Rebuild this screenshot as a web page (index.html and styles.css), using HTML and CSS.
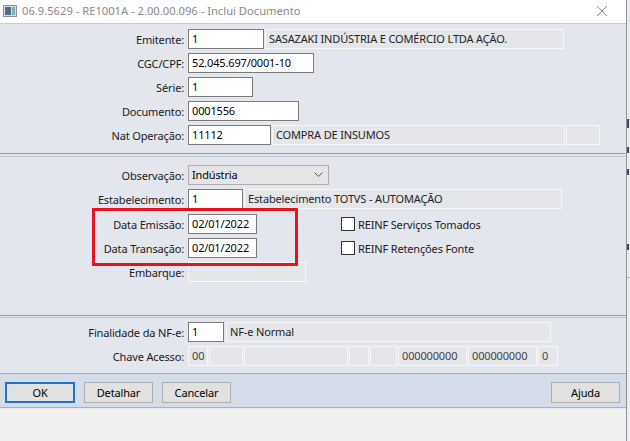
FILE: index.html
```html
<!DOCTYPE html>
<html lang="pt-BR">

<head>
    <meta charset="UTF-8">
    <meta name="viewport" content="width=device-width, initial-scale=1.0">
    <title>Inclui Documento</title>
    <link rel="stylesheet" href="styles.css">
</head>

<body>
    <div class="window">
        <div class="titlebar">
            <svg class="app-icon" width="14" height="12" viewBox="0 0 14 12">
                <rect x="0.5" y="0.5" width="13" height="11" fill="#d9dde3" stroke="#8a9099"/>
                <rect x="2" y="2" width="6" height="8" fill="#4d6f86"/>
                <rect x="9" y="2" width="3" height="8" fill="#7fb0b8"/>
            </svg>
            <span class="title">06.9.5629 - RE1001A - 2.00.00.096 - Inclui Documento</span>
            <svg class="close" width="12" height="12" viewBox="0 0 12 12">
                <path d="M1 1 L11 11 M11 1 L1 11" stroke="#8c8c8c" stroke-width="1"/>
            </svg>
        </div>

        <div class="content">
            <!-- dados do emitente -->
            <section class="group group-top">
                <div class="row">
                    <label class="lbl">Emitente:</label>
                    <span class="field w-emit">1</span>
                    <span class="ro w-razao">SASAZAKI INDÚSTRIA E COMÉRCIO LTDA AÇÃO.</span>
                </div>
                <div class="row">
                    <label class="lbl">CGC/CPF:</label>
                    <span class="field w-cgc">52.045.697/0001-10</span>
                </div>
                <div class="row">
                    <label class="lbl">Série:</label>
                    <span class="field w-serie">1</span>
                </div>
                <div class="row">
                    <label class="lbl">Documento:</label>
                    <span class="field w-doc">0001556</span>
                </div>
                <div class="row">
                    <label class="lbl">Nat Operação:</label>
                    <span class="field w-nat">11112</span>
                    <span class="ro w-natdesc">COMPRA DE INSUMOS</span>
                    <span class="ro w-natx"></span>
                </div>
            </section>

            <!-- datas -->
            <section class="group group-mid">
                <div class="row">
                    <label class="lbl">Observação:</label>
                    <span class="select">Indústria
                        <svg class="chevron" width="9" height="6" viewBox="0 0 9 6">
                            <path d="M0.5 0.5 L4.5 4.5 L8.5 0.5" fill="none" stroke="#555" stroke-width="1"/>
                        </svg>
                    </span>
                </div>
                <div class="row">
                    <label class="lbl">Estabelecimento:</label>
                    <span class="field w-estab">1</span>
                    <span class="ro w-estabdesc">Estabelecimento TOTVS - AUTOMAÇÃO</span>
                </div>
                <div class="row row-date">
                    <label class="lbl">Data Emissão:</label>
                    <span class="field w-date">02/01/2022</span>
                    <span class="check"></span>
                    <span class="check-label">REINF Serviços Tomados</span>
                </div>
                <div class="row">
                    <label class="lbl">Data Transação:</label>
                    <span class="field w-date">02/01/2022</span>
                    <span class="check"></span>
                    <span class="check-label">REINF Retenções Fonte</span>
                </div>
                <div class="row">
                    <label class="lbl">Embarque:</label>
                    <span class="ro w-embarque"></span>
                </div>
                <div class="highlight"></div>
            </section>

            <!-- nf-e -->
            <section class="group group-nfe">
                <div class="row">
                    <label class="lbl">Finalidade da NF-e:</label>
                    <span class="field w-fin">1</span>
                    <span class="ro w-findesc">NF-e Normal</span>
                </div>
                <div class="row">
                    <label class="lbl">Chave Acesso:</label>
                    <span class="ro key k1">00</span>
                    <span class="ro key k2"></span>
                    <span class="ro key k3"></span>
                    <span class="ro key k4"></span>
                    <span class="ro key k5"></span>
                    <span class="ro key k6">000000000</span>
                    <span class="ro key k6">000000000</span>
                    <span class="ro key k4">0</span>
                </div>
            </section>

            <div class="buttonbar">
                <button class="btn btn-default">OK</button>
                <button class="btn">Detalhar</button>
                <button class="btn">Cancelar</button>
                <span class="spacer"></span>
                <button class="btn">Ajuda</button>
            </div>
            <div class="statusbar"></div>
        </div>
    </div>

    <div class="behind">
        <span class="frag f1"></span>
        <span class="frag f2"></span>
        <span class="frag f3"></span>
        <span class="frag f4"></span>
        <span class="frag f5"></span>
    </div>
</body>

</html>
```

FILE: styles.css
```css
body {
    margin: 0;
    padding: 0;
    display: flex;
    width: 630px;
    height: 441px;
    overflow: hidden;
    font-family: "Noto Sans", "Open Sans", sans-serif;
    font-size: 11px;
    letter-spacing: -0.15px;
    color: #000;
    background-color: #e8e8e8;
}

.window {
    width: 626px;
    height: 441px;
    border-right: 1px solid #8f949b;
    display: flex;
    flex-direction: column;
    background-color: #e3e6ed;
}

.titlebar {
    height: 23px;
    background-color: #fff;
    border-bottom: 1px solid #c9ccd2;
    display: flex;
    align-items: center;
    padding-left: 3px;
}

.app-icon {
    margin-top: -1px;
}

.title {
    margin-left: 5px;
    color: #8a8a8a;
    font-size: 11.2px;
    letter-spacing: 0;
    flex: 1;
    margin-top: -2px;
}

.close {
    margin-right: 18px;
    margin-top: -2px;
}

.content {
    flex: 1;
    display: flex;
    flex-direction: column;
}

.group {
    display: flex;
    flex-direction: column;
    gap: 4px;
}

.group-top {
    padding: 5px 0 8px;
    border-bottom: 1px solid #959caa;
}

.group-mid {
    position: relative;
    margin-top: 2px;
    border-top: 1px solid #c0c5cf;
    padding: 8px 0 33px;
    border-bottom: 1px solid #959caa;
}

.group-nfe {
    margin-top: 1px;
    border-top: 1px solid #c0c5cf;
    padding: 4px 0 7px;
}

.row {
    display: flex;
    align-items: center;
    height: 20px;
}

.row-date {
    margin-top: 1px;
}

.lbl {
    width: 185px;
    text-align: right;
    padding-right: 1px;
    box-sizing: border-box;
    color: #1a1a1a;
    white-space: nowrap;
}

.field,
.ro,
.select {
    box-sizing: border-box;
    height: 20px;
    line-height: 18px;
    padding-left: 3px;
    white-space: nowrap;
    overflow: hidden;
}

.field {
    background-color: #fff;
    border: 1px solid #7a7a7a;
    margin-left: 3px;
}

.ro {
    background-color: #e4e6ea;
    border: 1px solid #f8f8fa;
    color: #222;
    margin-left: 1px;
}

.select {
    margin-left: 3px;
    width: 141px;
    background-color: #e5e5e5;
    border: 1px solid #adadad;
    display: flex;
    align-items: center;
    justify-content: space-between;
    padding-right: 5px;
}

.chevron {
    flex: none;
}

.w-emit { width: 76px; }
.w-razao { width: 299px; }
.w-cgc { width: 126px; }
.w-serie { width: 65px; }
.w-doc { width: 111px; }
.w-nat { width: 83px; }
.w-natdesc { width: 293px; }
.w-natx { width: 34px; }
.w-estab { width: 55px; }
.w-estabdesc { width: 318px; }
.w-date { width: 69px; }
.row .w-embarque { width: 118px; margin-left: 3px; }
.w-fin { width: 36px; }
.row .w-findesc { width: 325px; margin-left: 2px; }

.key {
    color: #444;
}

.row .k1 { width: 20px; margin-left: 3px; }
.k2 { width: 34px; }
.k3 { width: 104px; }
.k4 { width: 20px; }
.k5 { width: 27px; }
.k6 { width: 69px; }

.check {
    width: 14px;
    height: 14px;
    box-sizing: border-box;
    border: 1px solid #333;
    background-color: #fff;
    margin-left: 84px;
}

.check-label {
    margin-left: 3px;
    color: #1a1a1a;
}

.highlight {
    position: absolute;
    left: 92px;
    top: 51px;
    width: 206px;
    height: 58px;
    box-sizing: border-box;
    border: 3px solid #e5131d;
}

.buttonbar {
    height: 35px;
    border-top: 1px solid #a3aab7;
    border-bottom: 1px solid #a9b0bc;
    background-color: #d4dcea;
    display: flex;
    align-items: flex-start;
    gap: 9px;
    padding: 8px 6px 0 5px;
    box-sizing: border-box;
}

.btn {
    height: 21px;
    width: 69px;
    padding: 0;
    font-family: inherit;
    font-size: 11px;
    letter-spacing: inherit;
    color: #000;
    background-color: #e1e1e1;
    border: 1px solid #adadad;
}

.btn-default {
    width: 70px;
    border: 2px solid #1f74c8;
}

.spacer {
    flex: 1;
}

.statusbar {
    flex: 1;
    background-color: #f0f0f0;
    border-top: 1px solid #e6e6e6;
}

.behind {
    width: 3px;
    display: flex;
    flex-direction: column;
    background-color: #ececec;
}

.frag {
    display: block;
    width: 2px;
    background-color: #3a4a66;
}

.f1 { height: 9px; margin-top: 119px; }
.f2 { height: 6px; margin-top: 19px; }
.f3 { height: 6px; margin-top: 16px; }
.f4 { height: 6px; margin-top: 69px; }
.f5 { height: 1px; margin-top: 27px; width: 3px; background-color: #b0b0b0; }
```
